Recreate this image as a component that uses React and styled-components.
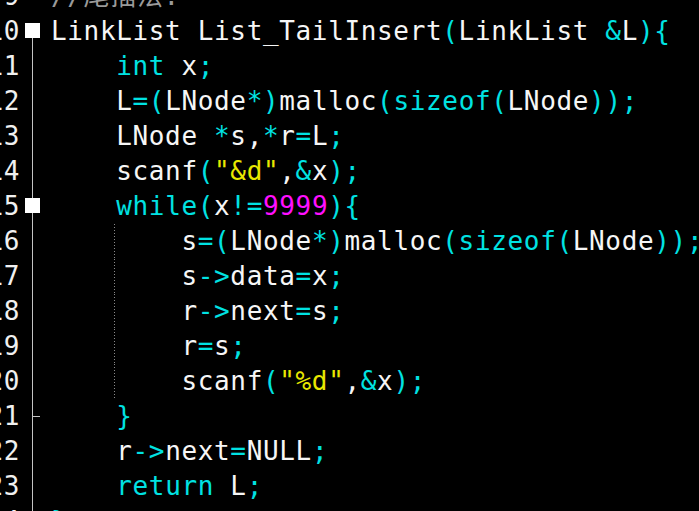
import React from "react";
import styled, { createGlobalStyle, css } from "styled-components";

const Global = createGlobalStyle`
  html, body { margin: 0; padding: 0; background: #000; }
  body { width: 699px; height: 511px; overflow: hidden; }
`;

const COLORS = {
  t: "#f6f6f6",
  k: "#00e2e2",
  s: "#e8e800",
  n: "#ff10ff",
  c: "#9a9a9a",
};

const Editor = styled.div`
  width: 699px;
  height: 511px;
  overflow: hidden;
  background: #000;
  font-family: "DejaVu Sans Mono", "Noto Sans CJK SC", monospace;
  font-size: 26px;
  letter-spacing: 0.65px;
`;

const Lines = styled.div`
  display: flex;
  flex-direction: column;
  margin: -21px 0 0 -13px;
`;

const Row = styled.div`
  display: grid;
  grid-template-columns: 33px 31px 1fr;
  height: 35px;
  align-items: stretch;
`;

const Num = styled.div`
  color: #f0f0f0;
  text-align: right;
  line-height: 35px;
  white-space: pre;
`;

const lineBg = "linear-gradient(#c4c4c4, #c4c4c4)";

const Fold = styled.div`
  display: flex;
  align-items: center;
  justify-content: flex-start;
  background-repeat: no-repeat;
  ${({ $kind }) =>
    $kind === "start" &&
    css`
      background-image: ${lineBg};
      background-size: 1px 50%;
      background-position: 12px bottom;
    `}
  ${({ $kind }) =>
    ($kind === "line" || $kind === "box") &&
    css`
      background-image: ${lineBg};
      background-size: 1px 100%;
      background-position: 12px 0;
    `}
  ${({ $kind }) =>
    $kind === "end" &&
    css`
      background-image: ${lineBg}, ${lineBg};
      background-size: 1px 100%, 7px 1px;
      background-position: 12px 0, 13px 17px;
    `}
`;

const Box = styled.span`
  width: 15px;
  height: 15px;
  flex: none;
  background: #fff;
  margin-left: 5px;
  margin-top: -2px;
`;

const Code = styled.div`
  line-height: 35px;
  white-space: pre;
  background-repeat: no-repeat;
  ${({ $guide }) =>
    $guide &&
    css`
      background-image: repeating-linear-gradient(
        to bottom,
        #8a8a8a 0 1px,
        transparent 1px 3px
      );
      background-size: 1px 100%;
      background-position: 63px 0;
    `}
`;

const Tok = styled.span`
  color: ${({ $t }) => COLORS[$t]};
`;

const lines = [
  { n: 9, tk: [["//尾插法:", "c"]] },
  {
    n: 10,
    fold: "start",
    tk: [
      ["LinkList List_TailInsert", "t"],
      ["(", "k"],
      ["LinkList ", "t"],
      ["&", "k"],
      ["L", "t"],
      ["){", "k"],
    ],
  },
  { n: 11, fold: "line", tk: [["    ", "t"], ["int", "k"], [" x", "t"], [";", "k"]] },
  {
    n: 12,
    fold: "line",
    tk: [
      ["    L", "t"],
      ["=(", "k"],
      ["LNode", "t"],
      ["*)", "k"],
      ["malloc", "t"],
      ["(sizeof(", "k"],
      ["LNode", "t"],
      ["));", "k"],
    ],
  },
  {
    n: 13,
    fold: "line",
    tk: [
      ["    LNode ", "t"],
      ["*", "k"],
      ["s", "t"],
      [",", "t"],
      ["*", "k"],
      ["r", "t"],
      ["=", "k"],
      ["L", "t"],
      [";", "k"],
    ],
  },
  {
    n: 14,
    fold: "line",
    tk: [
      ["    scanf", "t"],
      ["(", "k"],
      ['"&d"', "s"],
      [",", "t"],
      ["&", "k"],
      ["x", "t"],
      [");", "k"],
    ],
  },
  {
    n: 15,
    fold: "box",
    tk: [
      ["    ", "t"],
      ["while(", "k"],
      ["x", "t"],
      ["!=", "k"],
      ["9999", "n"],
      ["){", "k"],
    ],
  },
  {
    n: 16,
    fold: "line",
    guide: true,
    tk: [
      ["        s", "t"],
      ["=(", "k"],
      ["LNode", "t"],
      ["*)", "k"],
      ["malloc", "t"],
      ["(sizeof(", "k"],
      ["LNode", "t"],
      ["));", "k"],
    ],
  },
  {
    n: 17,
    fold: "line",
    guide: true,
    tk: [
      ["        s", "t"],
      ["->", "k"],
      ["data", "t"],
      ["=", "k"],
      ["x", "t"],
      [";", "k"],
    ],
  },
  {
    n: 18,
    fold: "line",
    guide: true,
    tk: [
      ["        r", "t"],
      ["->", "k"],
      ["next", "t"],
      ["=", "k"],
      ["s", "t"],
      [";", "k"],
    ],
  },
  {
    n: 19,
    fold: "line",
    guide: true,
    tk: [
      ["        r", "t"],
      ["=", "k"],
      ["s", "t"],
      [";", "k"],
    ],
  },
  {
    n: 20,
    fold: "line",
    guide: true,
    tk: [
      ["        scanf", "t"],
      ["(", "k"],
      ['"%d"', "s"],
      [",", "t"],
      ["&", "k"],
      ["x", "t"],
      [");", "k"],
    ],
  },
  { n: 21, fold: "end", tk: [["    ", "t"], ["}", "k"]] },
  {
    n: 22,
    fold: "line",
    tk: [
      ["    r", "t"],
      ["->", "k"],
      ["next", "t"],
      ["=", "k"],
      ["NULL", "t"],
      [";", "k"],
    ],
  },
  { n: 23, fold: "line", tk: [["    ", "t"], ["return", "k"], [" L", "t"], [";", "k"]] },
  { n: 24, fold: "line", tk: [["}", "k"]] },
];

export default function App() {
  return (
    <>
      <Global />
      <Editor>
        <Lines>
          {lines.map((l) => (
            <Row key={l.n}>
              <Num>{String(l.n).padStart(2, " ")}</Num>
              <Fold $kind={l.fold}>
                {(l.fold === "start" || l.fold === "box") && <Box />}
              </Fold>
              <Code $guide={l.guide}>
                {l.tk.map(([text, t], i) => (
                  <Tok key={i} $t={t}>
                    {text}
                  </Tok>
                ))}
              </Code>
            </Row>
          ))}
        </Lines>
      </Editor>
    </>
  );
}
